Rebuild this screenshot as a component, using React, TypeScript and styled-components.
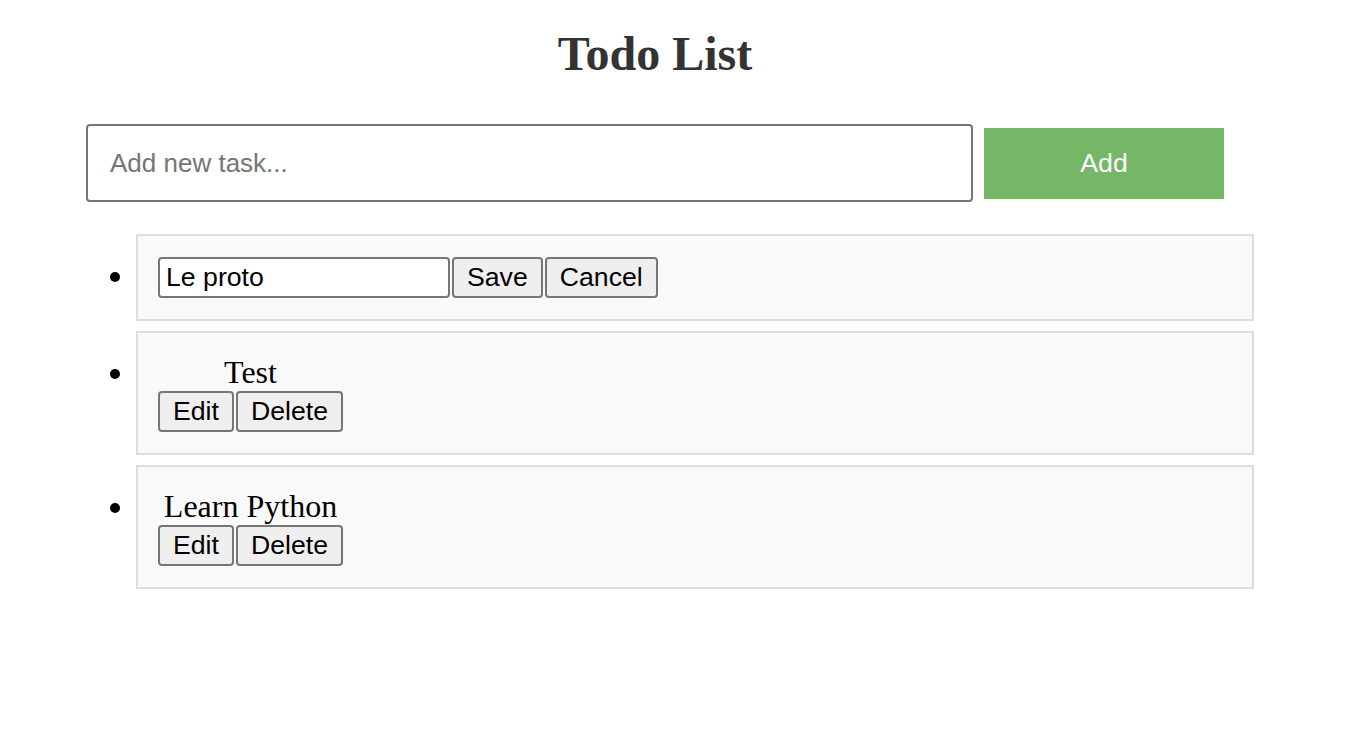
import styled, { createGlobalStyle } from 'styled-components';

const GlobalStyle = createGlobalStyle`
  body {
    margin: 0;
    background: #ffffff;
    font-family: "Liberation Serif", "Times New Roman", serif;
  }
`;

const Container = styled.div`
  width: 1138px;
  margin-left: 86px;
  padding-top: 26px;
`;

const Title = styled.h1`
  margin: 0 0 43px;
  font-size: 48px;
  font-weight: bold;
  text-align: center;
  color: #333333;
`;

const Form = styled.form`
  display: flex;
  align-items: center;
  gap: 11px;
  margin-bottom: 32px;
`;

const TaskInput = styled.input`
  box-sizing: border-box;
  width: 887px;
  height: 78px;
  padding: 0 22px;
  border: 2px solid #767676;
  border-radius: 4px;
  font-family: "Liberation Sans", Arial, sans-serif;
  font-size: 26px;
  color: #000000;
  outline: none;

  &::placeholder {
    color: #757575;
  }
`;

const AddButton = styled.button`
  width: 240px;
  height: 71px;
  border: none;
  background: #75b667;
  color: #ffffff;
  font-family: "Liberation Sans", Arial, sans-serif;
  font-size: 26.67px;
  cursor: pointer;
`;

const List = styled.ul`
  width: 1118px;
  margin: 0;
  padding: 0 0 0 50px;
  list-style: disc;
`;

const Item = styled.li`
  margin-bottom: 10px;
  padding: 21px 20px;
  border: 2px solid #dddddd;
  background: #f9f9f9;
  font-size: 32px;
  color: #000000;
`;

const Stack = styled.div<{ $column?: boolean }>`
  display: inline-flex;
  flex-direction: ${(props) => (props.$column ? 'column' : 'row')};
  align-items: ${(props) => (props.$column ? 'center' : 'baseline')};
  gap: ${(props) => (props.$column ? '0' : '2px')};
  vertical-align: baseline;
`;

const Buttons = styled.div`
  display: flex;
  gap: 2px;
`;

const EditInput = styled.input`
  box-sizing: border-box;
  width: 292px;
  height: 41px;
  padding: 2px 6px;
  border: 2px solid #767676;
  border-radius: 4px;
  background: #ffffff;
  font-family: "Liberation Sans", Arial, sans-serif;
  font-size: 26.67px;
  color: #000000;
  outline: none;
`;

const SmallButton = styled.button`
  box-sizing: border-box;
  height: 41px;
  padding: 0 13px;
  border: 2px solid #767676;
  border-radius: 4px;
  background: #efefef;
  font-family: "Liberation Sans", Arial, sans-serif;
  font-size: 26.67px;
  color: #000000;
  cursor: pointer;
`;

const Text = styled.span`
  line-height: 37px;
`;

const todos = ['Test', 'Learn Python'];

export default function App() {
  return (
    <>
      <GlobalStyle />
      <Container>
        <Title>Todo List</Title>
        <Form onSubmit={(e) => e.preventDefault()}>
          <TaskInput type="text" placeholder="Add new task..." />
          <AddButton type="submit">Add</AddButton>
        </Form>
        <List>
          <Item>
            <Stack>
              <EditInput type="text" defaultValue="Le proto" />
              <SmallButton type="button">Save</SmallButton>
              <SmallButton type="button">Cancel</SmallButton>
            </Stack>
          </Item>
          {todos.map((todo) => (
            <Item key={todo}>
              <Stack $column>
                <Text>{todo}</Text>
                <Buttons>
                  <SmallButton type="button">Edit</SmallButton>
                  <SmallButton type="button">Delete</SmallButton>
                </Buttons>
              </Stack>
            </Item>
          ))}
        </List>
      </Container>
    </>
  );
}
